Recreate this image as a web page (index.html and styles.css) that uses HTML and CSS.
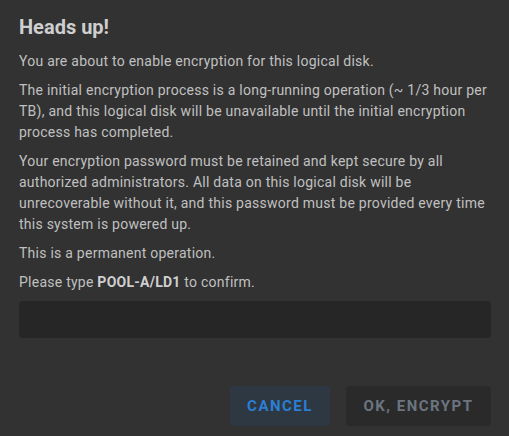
FILE: index.html
```html
<!DOCTYPE html>
<html>
<head>
<meta charset="utf-8">
<link rel="stylesheet" href="styles.css">
</head>
<body>
<div class="dialog">
  <h2 class="title">Heads up!</h2>
  <p class="text">You are about to enable encryption for this logical disk.</p>
  <p class="text">The initial encryption process is a long-running operation (~ 1/3 hour per TB), and this logical disk will be unavailable until the initial encryption process has completed.</p>
  <p class="text">Your encryption password must be retained and kept secure by all authorized administrators. All data on this logical disk will be unrecoverable without it, and this password must be provided every time this system is powered up.</p>
  <p class="text">This is a permanent operation.</p>
  <p class="text">Please type <strong>POOL-A/LD1</strong> to confirm.</p>
  <input class="field" type="text">
  <div class="actions">
    <button class="btn btn-cancel">Cancel</button>
    <button class="btn btn-ok">OK, Encrypt</button>
  </div>
</div>
</body>
</html>
```
FILE: styles.css
```css
html, body {
  margin: 0;
  padding: 0;
  background: #323232;
}
body {
  font-family: Roboto, "Liberation Sans", sans-serif;
  color: #c0c0c0;
  width: 509px;
  height: 436px;
  overflow: hidden;
}
.dialog {
  padding: 15px 18px 0 19px;
}
.title {
  margin: 0 0 12px;
  font-size: 20px;
  line-height: 24px;
  font-weight: 700;
  color: #cfcfcf;
}
.text {
  margin: 0 0 8px;
  font-size: 14px;
  line-height: 21px;
  letter-spacing: 0.25px;
}
.text strong {
  font-weight: 700;
  color: #cfcfcf;
}
.field {
  display: block;
  box-sizing: border-box;
  width: 100%;
  height: 37px;
  margin: 0;
  border: none;
  border-radius: 4px;
  background: #262626;
  outline: none;
}
.actions {
  display: flex;
  justify-content: flex-end;
  gap: 16px;
  margin-top: 48px;
}
.btn {
  height: 40px;
  border: none;
  border-radius: 4px;
  font-family: Roboto, "Liberation Sans", sans-serif;
  font-size: 15px;
  font-weight: 700;
  letter-spacing: 1.5px;
  text-transform: uppercase;
  padding: 0;
}
.btn-cancel {
  width: 100px;
  background: #2e3843;
  color: #2a7fd5;
}
.btn-ok {
  width: 145px;
  background: #2a2a2a;
  color: #6b7580;
}
```
